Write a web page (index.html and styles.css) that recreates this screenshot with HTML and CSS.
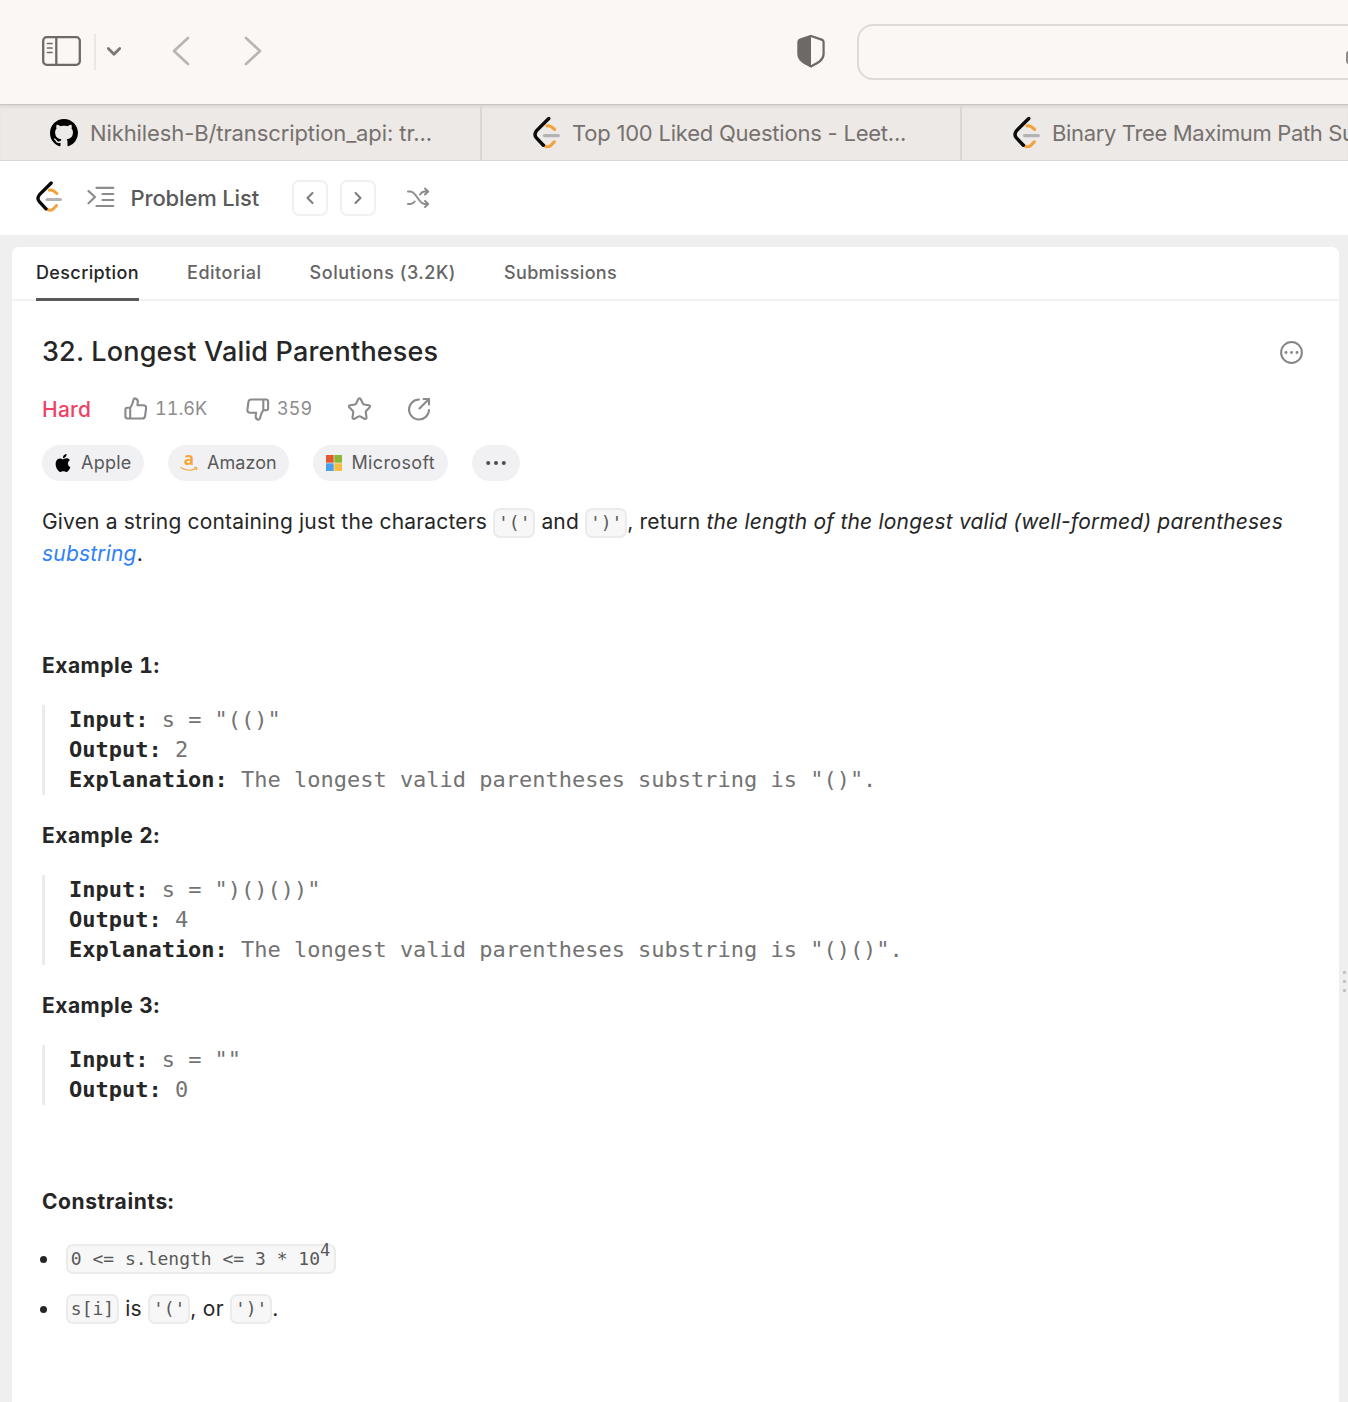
FILE: index.html
```html
<!DOCTYPE html>
<html lang="en">
<head>
<meta charset="utf-8">
<title>Longest Valid Parentheses</title>
<link rel="stylesheet" href="styles.css">
</head>
<body>
<svg class="defs" width="0" height="0">
  <symbol id="leetcode" viewBox="0 0 27 31">
    <path d="M13.500 9.200Q16.500 8.200 20.800 12.500M11 28.200Q14 30.300 17 28.200L20.500 24.500" fill="none" stroke="#f1a23a" stroke-width="3" stroke-linecap="round"/>
    <path d="M11 18.500H24.500" stroke="#b3b3b3" stroke-width="3" stroke-linecap="round"/>
    <path d="M15.200 2L3.500 13.700Q.5 17.300 3.300 20.700L10 27.800" fill="none" stroke="#0a0a0a" stroke-width="3.300" stroke-linecap="round"/>
  </symbol>
</svg>

<header class="toolbar">
  <svg class="icon sidebar" width="40" height="32" viewBox="0 0 40 32" fill="none" stroke="#6e6965" stroke-width="2.300">
    <rect x="2.200" y="2.200" width="36.600" height="27.600" rx="3.500"/><path d="M15.300 2V30"/>
    <path d="M6.500 8.500h4.500M6.500 13h4.500M6.500 17.500h4.500" stroke-width="1.700" stroke-linecap="round"/>
  </svg>
  <span class="divider"></span>
  <svg class="icon caret" width="16" height="12" viewBox="0 0 16 12" fill="none" stroke="#7d7875" stroke-width="2.800" stroke-linecap="round" stroke-linejoin="round"><path d="M2.300 3.500L8 9.300L13.700 3.500"/></svg>
  <svg class="icon back" width="20" height="32" viewBox="0 0 20 32" fill="none" stroke="#b9b5b2" stroke-width="2.700" stroke-linecap="round" stroke-linejoin="round"><path d="M17 3L3 16L17 29"/></svg>
  <svg class="icon forward" width="20" height="32" viewBox="0 0 20 32" fill="none" stroke="#b9b5b2" stroke-width="2.700" stroke-linecap="round" stroke-linejoin="round"><path d="M3 3L17 16L3 29"/></svg>
  <svg class="icon shield" width="28" height="34" viewBox="0 0 28 34"><path d="M14 2L24.700 5.600Q26.600 6.300 26.600 8V20C26.600 26 21 29 14 32.400C7 29 1.400 26 1.400 20V8Q1.400 6.300 3.300 5.600Z" fill="none" stroke="#6e6965" stroke-width="2.200"/><path d="M14 2L3.300 5.600Q1.400 6.300 1.400 8V20C1.400 26 7 29 14 32.400Z" fill="#6e6965"/></svg>
  <div class="address"><span class="lock"></span></div>
</header>

<div class="tabbar">
  <div class="tab tab-github">
    <svg width="28" height="28" viewBox="0 0 16 16"><path fill="#000" d="M8 0C3.580 0 0 3.580 0 8c0 3.540 2.290 6.530 5.470 7.590.4.070.55-.17.55-.38 0-.19-.01-.82-.01-1.490-2.010.37-2.530-.49-2.690-.94-.09-.23-.48-.94-.82-1.130-.28-.15-.68-.52-.01-.53.63-.01 1.080.58 1.230.82.72 1.210 1.870.87 2.330.66.07-.52.28-.87.51-1.070-1.780-.2-3.640-.89-3.640-3.950 0-.87.31-1.590.82-2.150-.08-.2-.36-1.020.08-2.120 0 0 .67-.21 2.200.82.64-.18 1.320-.27 2-.27s1.360.09 2 .27c1.530-1.040 2.200-.82 2.200-.82.44 1.100.16 1.920.08 2.120.51.56.82 1.270.82 2.150 0 3.070-1.870 3.750-3.650 3.950.29.25.54.73.54 1.480 0 1.070-.01 1.930-.01 2.200 0 .21.15.46.55.38A8.010 8.010 0 0 0 16 8c0-4.420-3.580-8-8-8z"/></svg>
    <span class="t-github">Nikhilesh-B/transcription_api: tr...</span>
  </div>
  <div class="tab">
    <svg width="28" height="33"><use href="#leetcode"/></svg>
    <span class="t-top">Top 100 Liked Questions - Leet...</span>
  </div>
  <div class="tab tab-last">
    <svg width="28" height="33"><use href="#leetcode"/></svg>
    <span class="t-tree">Binary Tree Maximum Path Sum</span>
  </div>
</div>

<nav class="nav">
  <svg class="logo" width="27" height="31"><use href="#leetcode"/></svg>
  <svg class="list" width="29" height="22" viewBox="0 0 29 22" fill="none" stroke="#8c8c8c" stroke-width="2.200" stroke-linecap="round" stroke-linejoin="round"><path d="M2.500 5L9 11L2.500 17.300M10.500 1.800H27.300M16.500 8H27.300M16.500 14H27.300M10.500 20H27.300"/></svg>
  <span class="nav-title">Problem List</span>
  <button class="step"><svg width="10" height="14" viewBox="0 0 10 14" fill="none" stroke="#7a7a7a" stroke-width="2" stroke-linecap="round" stroke-linejoin="round"><path d="M7.500 2L2.500 7L7.500 12"/></svg></button>
  <button class="step"><svg width="10" height="14" viewBox="0 0 10 14" fill="none" stroke="#7a7a7a" stroke-width="2" stroke-linecap="round" stroke-linejoin="round"><path d="M2.500 2L7.500 7L2.500 12"/></svg></button>
  <svg class="shuffle" width="24" height="22" viewBox="0 0 24 22" fill="none" stroke="#8c8c8c" stroke-width="2" stroke-linecap="round" stroke-linejoin="round"><path d="M2 4.500H4.500C7 4.500 8 6 9.500 8L13.500 13.500C15 15.500 16 17 18.500 17H22M2 17H4.500C6.500 17 7.500 16 8.700 14.500M14 7.500C15.200 5.800 16.500 4.500 18.500 4.500H22M19 1.500L22.200 4.500L19 7.500M19 14L22.200 17L19 20"/></svg>
</nav>

<main class="stage">
  <section class="panel">
    <div class="views">
      <span class="view active">Description</span>
      <span class="view v-editorial">Editorial</span>
      <span class="view v-solutions">Solutions (3.2K)</span>
      <span class="view v-sub">Submissions</span>
    </div>
    <div class="content">
      <div class="heading">
        <h1>32. Longest Valid Parentheses</h1>
        <svg width="25" height="25" viewBox="0 0 25 25"><circle cx="12.500" cy="12.500" r="10.400" fill="none" stroke="#858585" stroke-width="2"/><g fill="#858585"><circle cx="7" cy="12.500" r="1.400"/><circle cx="12.500" cy="12.500" r="1.400"/><circle cx="18" cy="12.500" r="1.400"/></g></svg>
      </div>
      <div class="stats">
        <span class="hard">Hard</span>
        <svg class="up" width="25" height="25" viewBox="-.5 .5 25 25"><path class="line" d="M6.700 11.200V22M1.900 13.200q0-2 2-2h2.600c2-1.800 2.800-5 3.500-8 .3-1 .9-1.500 1.800-1.300 2 .4 2.700 2 2.500 3.900l-.4 2.900h6c1.800 0 2.900 1.200 2.700 2.900l-1 7.900c-.2 1.500-1.300 2.500-2.800 2.500H3.900q-2 0-2-2z"/></svg>
        <span class="count up-count">11.6K</span>
        <svg class="down" width="25" height="25" viewBox="0 .5 25 25"><path class="line" transform="rotate(180 12.500 12.500)" d="M6.700 11.200V22M1.900 13.200q0-2 2-2h2.600c2-1.800 2.800-5 3.500-8 .3-1 .9-1.500 1.800-1.300 2 .4 2.700 2 2.500 3.900l-.4 2.900h6c1.800 0 2.900 1.200 2.700 2.900l-1 7.900c-.2 1.500-1.300 2.500-2.800 2.500H3.900q-2 0-2-2z"/></svg>
        <span class="count down-count">359</span>
        <svg class="star" width="26" height="26" viewBox=".5 0 26 26"><path class="line" d="M11.700 3.300Q13 1.300 14.300 3.300L16.500 7.800Q16.800 8.400 17.500 8.500L22.300 9.200Q24.500 9.800 23 11.500L19.600 14.900Q19.100 15.400 19.200 16.100L20 21.200Q20 23.500 18 22.700L13.700 20.400Q13 20.100 12.300 20.400L8 22.700Q6 23.500 6 21.200L6.800 16.100Q6.900 15.400 6.400 14.900L3 11.500Q1.500 9.800 3.700 9.200L8.500 8.500Q9.200 8.400 9.500 7.800Z"/></svg>
        <svg class="share" width="26" height="26" viewBox="0 0 26 26"><path class="line" d="M13 3.500A10 10 0 1 0 23 14M13.500 12.500L22.500 3.500M17.500 3H23V8.500"/></svg>
      </div>
      <div class="companies">
        <span class="pill apple"><svg width="18" height="18" viewBox="0 0 24 24"><path d="M12.152 6.896c-.948 0-2.415-1.078-3.960-1.040-2.040.027-3.910 1.183-4.961 3.014-2.117 3.675-.546 9.103 1.519 12.090 1.013 1.454 2.208 3.090 3.792 3.039 1.520-.065 2.090-.987 3.935-.987 1.831 0 2.350.987 3.960.948 1.637-.026 2.676-1.480 3.676-2.948 1.156-1.688 1.636-3.325 1.662-3.415-.039-.013-3.182-1.221-3.220-4.857-.026-3.040 2.480-4.494 2.597-4.559-1.429-2.090-3.623-2.324-4.390-2.376-2-.156-3.675 1.090-4.610 1.090zM15.530 3.830c.843-1.012 1.400-2.427 1.245-3.830-1.207.052-2.662.805-3.532 1.818-.78.896-1.454 2.338-1.273 3.714 1.338.104 2.715-.688 3.559-1.701"/></svg><span>Apple</span></span>
        <span class="pill amazon"><svg width="18" height="18" viewBox="0 0 18 18"><text x="9" y="11" text-anchor="middle" class="amazon-a">a</text><path d="M.8 13.500Q8.500 18.500 15.800 14.500M14.500 13.300Q17.800 12.800 16.500 15.700" fill="none" stroke="#f2a63b" stroke-width="1.100" stroke-linecap="round"/></svg><span>Amazon</span></span>
        <span class="pill microsoft"><svg width="16" height="16" viewBox="0 0 16 16"><path fill="#e0592f" d="M0 0h7.700v7.700H0z"/><path fill="#8bb832" d="M8.300 0H16v7.700H8.300z"/><path fill="#4ba0ea" d="M0 8.300h7.700V16H0z"/><path fill="#f7bd43" d="M8.300 8.300H16V16H8.300z"/></svg><span>Microsoft</span></span>
        <span class="pill more"><svg width="22" height="6" viewBox="0 0 22 6" fill="#4d4d4d"><circle cx="3.200" cy="3" r="2"/><circle cx="11" cy="3" r="2"/><circle cx="18.800" cy="3" r="2"/></svg></span>
      </div>
      <div class="problem">
        <p class="statement">Given a string containing just the characters <code>'('</code> and <code>')'</code>, return <em>the length of the longest valid (well-formed) parentheses</em><br><em class="link">substring</em>.</p>
        <p class="label first">Example 1:</p>
<pre><b>Input:</b> s = "(()"
<b>Output:</b> 2
<b>Explanation:</b> The longest valid parentheses substring is "()".</pre>
        <p class="label">Example 2:</p>
<pre><b>Input:</b> s = ")()())"
<b>Output:</b> 4
<b>Explanation:</b> The longest valid parentheses substring is "()()".</pre>
        <p class="label">Example 3:</p>
<pre><b>Input:</b> s = ""
<b>Output:</b> 0</pre>
        <p class="label constraints">Constraints:</p>
        <ul>
          <li><code>0 &lt;= s.length &lt;= 3 * 10<sup>4</sup></code></li>
          <li><code>s[i]</code> is <code>'('</code>, or <code>')'</code>.</li>
        </ul>
      </div>
    </div>
  </section>
  <div class="handle"><i></i><i></i><i></i></div>
</main>
</body>
</html>
```
FILE: styles.css
```css
* { box-sizing: border-box; }
body {
  margin: 0;
  height: 1402px;
  overflow: hidden;
  display: flex;
  flex-direction: column;
  background: #efefef;
  color: #262626;
  font-family: Inter, "Liberation Sans", sans-serif;
  white-space: nowrap;
}
svg { display: block; flex: none; overflow: visible; }
.defs { position: absolute; }

.toolbar {
  height: 104px;
  flex: none;
  display: flex;
  align-items: center;
  background: #fbf7f4;
  padding-left: 41px;
  overflow: hidden;
}
.toolbar .icon { margin-bottom: 2px; }
.divider { flex: none; width: 2px; height: 36px; margin: 0 10px 0 13px; background: #ebe7e4; }
.toolbar .back { margin-left: 49px; }
.toolbar .forward { margin-left: 52px; }
.toolbar .shield { margin-left: 534px; }
.address {
  flex: none;
  width: 520px;
  height: 56px;
  margin-left: 32px;
  border: 2px solid #dedad7;
  border-radius: 16px;
  padding: 25px 0 0 487px;
}
.lock { display: block; width: 18px; height: 13px; border-radius: 3px; background: #8f8b89; }

.tabbar {
  height: 57px;
  flex: none;
  display: flex;
  overflow: hidden;
  background: #ede9e6;
  border-top: 1px solid #c9c5c2;
  border-bottom: 1px solid #dad8d6;
  box-shadow: inset 0 3px 3px -1px #dcd8d5;
  color: #76716e;
  font-size: 22px;
}
.tab { flex: none; width: 480px; display: flex; align-items: center; gap: 11px; padding-left: 51px; border-right: 2px solid #dad6d3; }
.tab-github { width: 482px; gap: 12px; padding-left: 50px; }
.t-github { letter-spacing: -0.1px; }
.t-top { letter-spacing: -0.22px; }
.t-tree { letter-spacing: -0.35px; }

.nav {
  height: 74px;
  flex: none;
  display: flex;
  align-items: center;
  background: #fff;
  padding-left: 36px;
}
.logo { margin-bottom: 4px; }
.list { margin: 0 15.5px 2px 23px; }
.nav-title { width: 161.5px; font-size: 22px; font-weight: 500; color: #595959; letter-spacing: -0.15px; }
.step {
  width: 36px;
  height: 36px;
  padding: 0;
  display: flex;
  align-items: center;
  justify-content: center;
  border: 2px solid #f0f0f0;
  border-radius: 7px;
  background: #fff;
}
.step + .step { margin-left: 12px; }
.shuffle { margin-left: 30px; }

.stage { flex: 1; display: flex; padding-top: 12px; padding-left: 12px; }
.panel { width: 1327px; background: #fff; border-radius: 7px 7px 0 0; }
.handle { width: 9px; display: flex; flex-direction: column; justify-content: center; align-items: flex-end; gap: 6px; padding: 0 2px 0 0; margin-top: 314px; height: 1px; align-self: center; }
.handle i { flex: none; width: 3px; height: 3px; background: #c4c4c4; }

.views { height: 54px; display: flex; gap: 48px; padding: 0 24px; border-bottom: 2px solid #f2f2f2; }
.view { height: 54px; line-height: 51px; font-size: 18px; font-weight: 500; color: #656565; letter-spacing: 0.37px; }
.active { width: 103px; color: #262626; border-bottom: 3px solid #595959; }
.v-editorial { letter-spacing: 0.53px; }
.v-solutions { letter-spacing: 0.54px; }
.v-sub { letter-spacing: 0.32px; }

.content { padding: 0 35px 0 30px; }
.heading { display: flex; align-items: center; justify-content: space-between; height: 36px; margin-top: 33px; }
h1 { margin: 0; font-size: 27px; font-weight: 500; letter-spacing: 0.17px; line-height: 36px; }
.stats { display: flex; align-items: center; height: 30px; margin-top: 24px; }
.line { fill: none; stroke: #8a8a8a; stroke-width: 2.100; stroke-linecap: round; stroke-linejoin: round; }
.hard { width: 81px; font-size: 21px; font-weight: 500; color: #ef4164; letter-spacing: 0.25px; }
.count { font-size: 18px; color: #8c8c8c; letter-spacing: 0.05px; font-feature-settings: "tnum"; line-height: 22px; padding-bottom: 1px; }
.up-count { width: 90px; margin-left: 7px; }
.down-count { width: 70px; margin-left: 7px; }
.share { margin-left: 33px; }
.companies { display: flex; gap: 24px; margin-top: 21px; }
.pill { height: 36px; display: flex; align-items: center; border-radius: 18px; background: #f1f1f4; font-size: 18px; color: #595959; letter-spacing: 0.25px; }
.pill span { padding-bottom: 2px; }
.apple { width: 102px; padding-left: 12px; gap: 9px; }
.amazon { width: 121px; padding-left: 12px; gap: 9px; letter-spacing: 0.05px; }
.amazon-a { font: bold 17px "Open Sans", sans-serif; fill: #f2a63b; }
.microsoft { width: 135px; padding-left: 13px; gap: 9.5px; letter-spacing: 0.35px; }
.more { width: 48px; justify-content: center; }

.problem { margin-top: 25px; font-size: 21px; line-height: 32px; }
p { margin: 0; }
.statement { letter-spacing: 0.18px; }
.statement em { letter-spacing: 0.19px; }
.link { color: #2f81f7; }
.label { margin-top: 25px; font-weight: 700; letter-spacing: 0.5px; font-feature-settings: "tnum"; }
.label.first { margin-top: 80px; }
code {
  display: inline-block;
  height: 30px;
  line-height: 25px;
  vertical-align: top;
  margin-top: 2px;
  padding: 0 2.800px;
  border: 2px solid #ebebeb;
  border-radius: 7px;
  background: #f7f7f7;
  color: #595959;
  font-family: "DejaVu Sans Mono", monospace;
  font-size: 18px;
  letter-spacing: 0;
}
pre {
  margin: 23px 0 0;
  padding-left: 24px;
  border-left: 3px solid #ebebeb;
  font: 22px/30px "DejaVu Sans Mono", monospace;
  letter-spacing: -0.01px;
  color: #737373;
}
pre b { color: #262626; }
.label.constraints { margin-top: 81px; letter-spacing: 0.57px; }
ul { margin: 25px 0 0; padding: 0; list-style: none; }
li { height: 32px; display: flex; align-items: center; white-space: pre; margin-bottom: 18px; line-height: 30px; letter-spacing: 0.3px; }
li code { margin-top: 0; letter-spacing: 0; }
li::before { content: ""; width: 7px; height: 7px; margin: 1px 19.500px 0 -2.500px; border-radius: 50%; background: #262626; }
sup { font-size: 17px; line-height: 0; vertical-align: 9px; margin-right: 0.500px; }
```
